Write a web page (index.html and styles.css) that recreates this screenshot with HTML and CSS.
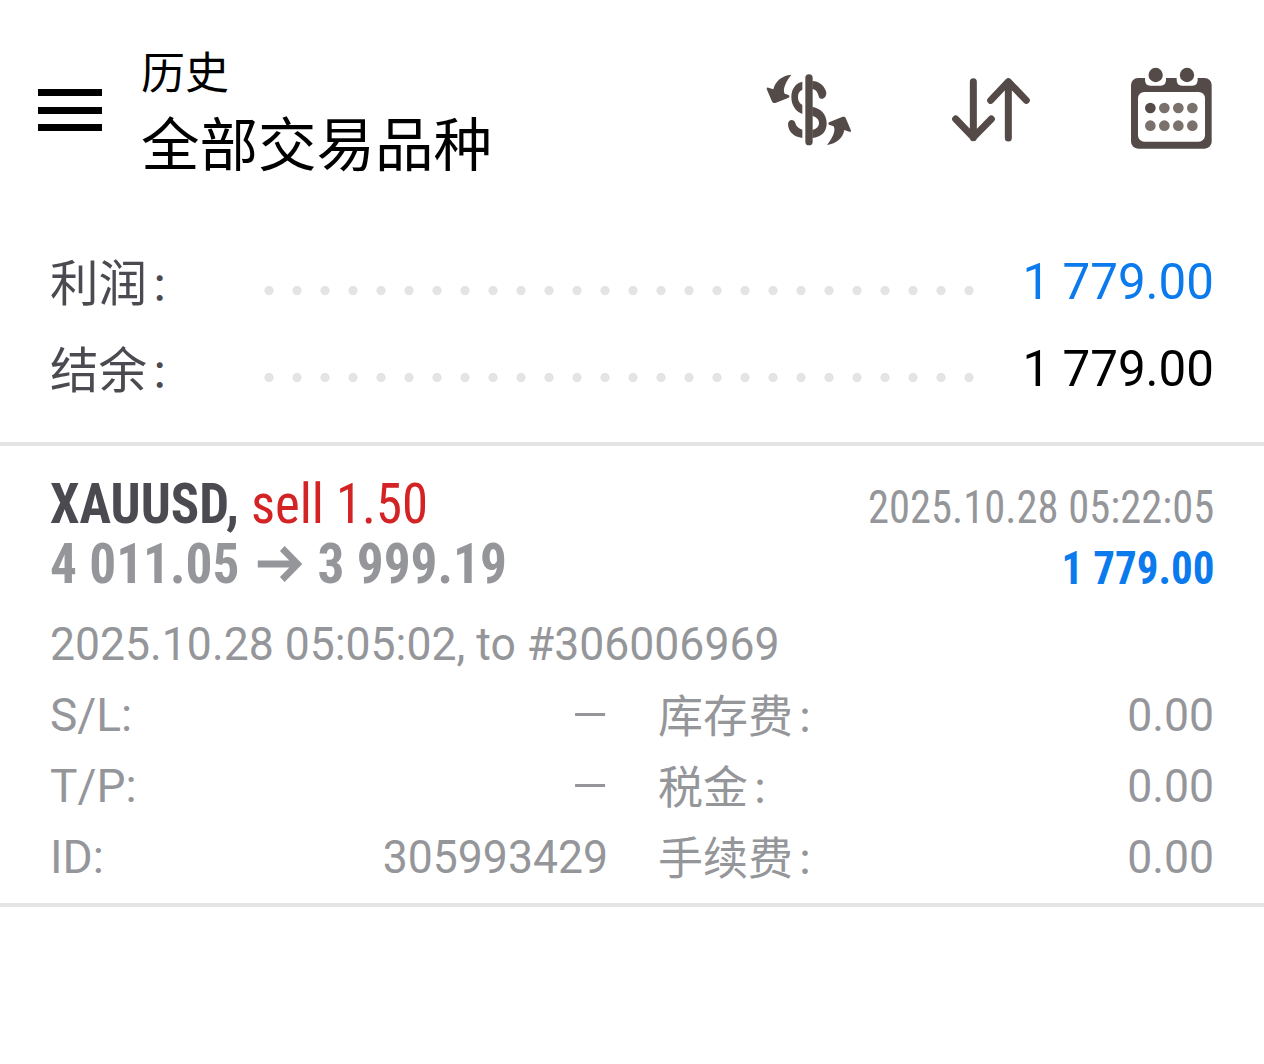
FILE: index.html
```
<!DOCTYPE html>
<html lang="zh-CN">
<head>
    <meta charset="UTF-8">
    <meta name="viewport" content="width=device-width, initial-scale=1.0">
    <title>历史</title>
    <link rel="stylesheet" href="styles.css">
</head>
<body>
    <header class="header">
        <div class="menu">
            <span></span>
            <span></span>
            <span></span>
        </div>
        <div class="titles">
            <div class="subtitle">历史</div>
            <h1>全部交易品种</h1>
        </div>
        <div class="actions">
            <!-- 货币 -->
            <svg class="icon-currency" width="120" height="105" viewBox="0 0 360 315">
                <path d="M177 69V260" fill="none" stroke="#544a47" stroke-width="22" stroke-linecap="round"/>
                <g fill="#544a47">
                    <path d="M157 80C137 84 124 102 124 126C124 151 137 169 157 177V150C148 145 144 138 144 126C144 115 148 108 157 104Z"/>
                    <path d="M157 224C145 220 138 214 136 204C133 191 114 192 114 208C115 231 132 246 157 249Z"/>
                    <path d="M187 78C207 79 221 90 228 109C233 128 215 138 207 127C203 112 199 104 187 102Z"/>
                    <path d="M187 155C214 161 230 179 230 205C230 232 213 247 187 249V225C199 222 207 215 207 204C207 193 200 187 187 182Z"/>
                    <path d="M124 59C95 62 76 78 70 103L55 98C50 97 49 100 51 104L65 137C68 144 72 145 78 143L114 129C120 126 120 121 114 119L104 116C96 100 111 76 124 59Z"/>
                    <path d="M231 270C260 266 278 250 283 225L298 230C304 231 304 228 302 224L288 191C286 185 282 184 276 186L239 201C233 204 234 208 239 210L251 214C259 229 245 253 231 270Z"/>
                </g>
            </svg>
            <!-- 排序 -->
            <svg class="icon-sort" width="110" height="95" viewBox="0 0 330 285">
                <g fill="none" stroke="#544a47" stroke-width="21" stroke-linecap="round" stroke-linejoin="round">
                    <path d="M115 65V233M62 177L115 232L169 177"/>
                    <path d="M220 234V66M167 121L220 65L274 121"/>
                </g>
            </svg>
            <!-- 日历 -->
            <svg class="icon-calendar" width="115" height="105" viewBox="0 0 345 315">
                <rect x="48" y="69" width="242" height="212" rx="21" fill="#544a47"/>
                <path d="M90 60V75Q90 92 106 92H137Q153 92 153 75V60ZM185 60V75Q185 92 201 92H232Q248 92 248 75V60Z" fill="#fff"/>
                <rect x="69" y="111" width="201" height="149" rx="19" fill="#fff"/>
                <g fill="#544a47">
                    <circle cx="122" cy="60" r="21.500"/>
                    <circle cx="216" cy="60" r="21.500"/>
                    <circle cx="106" cy="159" r="16"/>
                </g>
                <g fill="#7a716d">
                    <circle cx="148" cy="159" r="16"/>
                    <circle cx="190" cy="159" r="16"/>
                    <circle cx="232" cy="159" r="16"/>
                    <circle cx="106" cy="212" r="16"/>
                    <circle cx="148" cy="212" r="16"/>
                    <circle cx="190" cy="212" r="16"/>
                    <circle cx="232" cy="212" r="16"/>
                </g>
            </svg>
        </div>
    </header>

    <section class="summary">
        <div class="summary-row">
            <span class="label">利润<span class="colon">：</span></span>
            <span class="dots"></span>
            <span class="value blue">1 779.00</span>
        </div>
        <div class="summary-row">
            <span class="label">结余<span class="colon">：</span></span>
            <span class="dots"></span>
            <span class="value">1 779.00</span>
        </div>
    </section>

    <section class="deal">
        <div class="deal-row">
            <div class="symbol"><b>XAUUSD,</b> <span class="sell">sell 1.50</span></div>
            <div class="time">2025.10.28 05:22:05</div>
        </div>
        <div class="deal-row">
            <div class="price">
                <span>4 011.05</span>
                <svg class="arrow" width="48" height="36" viewBox="0 0 48 36">
                    <path d="M0 18H42M26 2.500L42 18L26 33.500" fill="none" stroke="#95969a" stroke-width="7"/>
                </svg>
                <span>3 999.19</span>
            </div>
            <div class="profit">1 779.00</div>
        </div>
        <div class="comment">2025.10.28 05:05:02, to #306006969</div>
        <div class="details">
            <span>S/L:</span><span class="num"><i class="dash"></i></span>
            <span class="fee">库存费<span class="colon">：</span></span><span class="num">0.00</span>
            <span>T/P:</span><span class="num"><i class="dash"></i></span>
            <span class="fee">税金<span class="colon">：</span></span><span class="num">0.00</span>
            <span>ID:</span><span class="num">305993429</span>
            <span class="fee">手续费<span class="colon">：</span></span><span class="num">0.00</span>
        </div>
    </section>
</body>
</html>
```
FILE: styles.css
```
body {
    margin: 0;
    background: #fff;
    color: #000;
    font-family: Roboto, "Noto Sans CJK SC", sans-serif;
}

.header {
    display: flex;
    height: 238px;
    box-sizing: border-box;
    padding: 40px 34px 0 38px;
}

.menu {
    display: flex;
    flex-direction: column;
    gap: 10.500px;
    width: 64px;
    padding-top: 49px;
}

.menu span {
    height: 7px;
    background: #000;
}

.titles {
    margin-left: 39px;
    flex: 1;
}

.subtitle {
    font-size: 44px;
    line-height: 68px;
}

.titles h1 {
    margin: 0;
    font-size: 58.500px;
    line-height: 77px;
    font-weight: 400;
}

.actions {
    display: flex;
    align-items: flex-start;
}

.icon-currency {
    margin-top: 15px;
}

.icon-sort {
    margin: 20px 70px 0 65px;
}

.icon-calendar {
    margin-top: 15px;
}

.summary {
    height: 204px;
    padding: 0 50px;
    border-bottom: 4px solid #e4e4e4;
}

.summary-row {
    display: flex;
    align-items: center;
    height: 87px;
    font-size: 49.300px;
}

.summary .label {
    width: 204.500px;
    padding-bottom: 4px;
    color: #4b4a51;
    font-size: 48.500px;
    white-space: nowrap;
}

.colon {
    margin-left: 3px;
    font-size: 0.8em;
    vertical-align: 1px;
}

.dots {
    width: 728px;
    height: 9px;
    margin-top: 18px;
    background: radial-gradient(circle, #e4e4e4 4.200px, transparent 5px) 0 0 / 28px 9px;
}

.value {
    margin-left: auto;
}

.blue {
    color: #0a7aed;
}

.deal {
    height: 457px;
    padding: 0 50px;
    border-bottom: 4px solid #e4e4e4;
    color: #95969a;
    font-size: 46px;
}

.deal-row {
    display: flex;
    justify-content: space-between;
    height: 60px;
    line-height: 60px;
    font-family: "Roboto Condensed", Roboto, sans-serif;
    font-stretch: 75%;
    white-space: nowrap;
}

.deal-row:first-child {
    padding-top: 28px;
}

.symbol,
.price {
    font-size: 56px;
    transform: scaleX(0.942);
    transform-origin: left;
}

.symbol b {
    color: #4b4a51;
}

.sell {
    color: #d32324;
}

.price {
    display: flex;
    align-items: center;
    font-weight: 700;
    transform: scaleX(0.952);
}

.arrow {
    margin: 0 15px 0 19px;
}

.time {
    padding-top: 3px;
    transform: scaleX(0.925);
    transform-origin: right;
}

.profit {
    padding-top: 4px;
    color: #0a7aed;
    font-weight: 700;
    transform: scaleX(0.935);
    transform-origin: right;
}

.comment {
    margin-top: 15px;
    height: 71px;
    line-height: 71px;
    transform: scaleX(0.968);
    transform-origin: left;
}

.details {
    display: grid;
    grid-template-columns: 200px 358px 200px 1fr;
    grid-auto-rows: 71px;
    line-height: 71px;
}

.details .fee {
    padding: 2px 0 0 50px;
    font-size: 45px;
    white-space: nowrap;
}

.num {
    text-align: right;
    transform: scaleX(0.968);
    transform-origin: right;
}

.dash {
    display: inline-block;
    width: 31px;
    height: 3px;
    margin-right: 3px;
    background: #95969a;
    vertical-align: 15px;
}
```
